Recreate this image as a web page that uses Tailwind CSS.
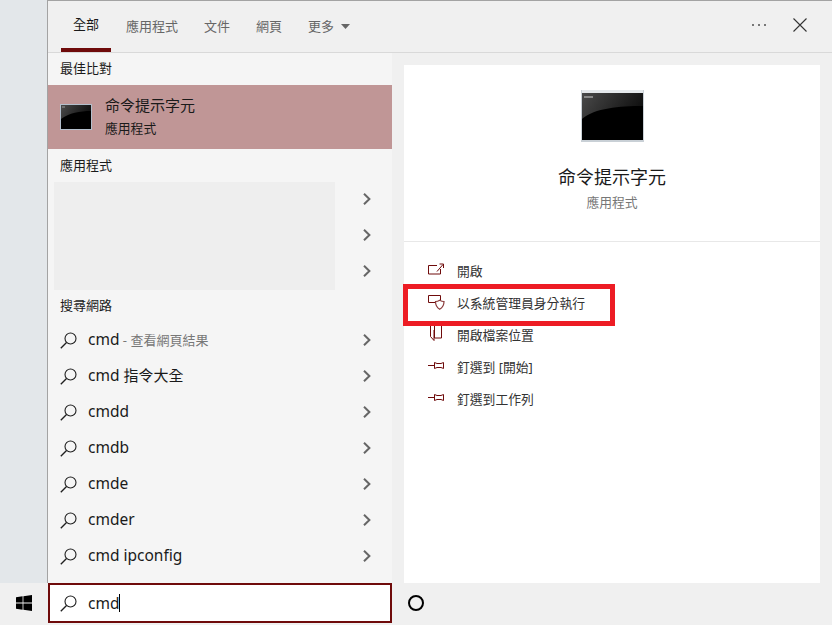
<!DOCTYPE html>
<html>
  <head>
    <title>Search cmd</title>
    <script src="https://cdn.jsdelivr.net/npm/@tailwindcss/browser@4"></script>
  </head>
  <body class="w-[832px] h-[625px] overflow-hidden bg-[#f0f0f0] text-[#1a1a1a] font-['Noto_Sans','Noto_Sans_CJK_TC',sans-serif]">
    <!-- shared icons -->
    <svg class="absolute w-0 h-0">
      <linearGradient id="shine" x1="0" y1="0" x2="1" y2="0.3">
        <stop offset="0" stop-color="#4a4a4a" />
        <stop offset="1" stop-color="#121212" />
      </linearGradient>
      <symbol id="search" viewBox="0 0 17 17">
        <circle cx="10.5" cy="6.5" r="5.5" fill="none" stroke="#1f1f1f" stroke-width="1.1" />
        <path d="M6.5 10.5L0.8 16.3" stroke="#1f1f1f" stroke-width="1.3" fill="none" />
      </symbol>
      <symbol id="chevron" viewBox="0 0 8 12">
        <path d="M1 0.8L6.4 6L1 11.2" stroke="#666" stroke-width="2" fill="none" />
      </symbol>
      <symbol id="pin" viewBox="0 0 17 9">
        <path d="M0 4.5H6M6.5 1.5L9 2.5H13L15.5 1.5V7.5L13 6.5H9L6.5 7.5Z" stroke="#6f0b0b" stroke-width="1" fill="none" />
      </symbol>
    </svg>

    <div class="flex h-[583px]">
      <div class="w-[47px] bg-[#e3e7ea]"></div>

      <div class="w-[785px] flex flex-col border-l border-t border-[#a3a3a3]">
        <!-- tabs -->
        <div class="h-[52px] shrink-0 flex items-stretch border-b border-[#d9d9d9] pl-[13px] text-[13px] text-[#666]">
          <div class="px-3 flex items-center pt-[1px] border-b-4 border-[#6f0b0b] text-[#1a1a1a] h-[51px]">全部</div>
          <div class="ml-[3px] px-3 flex items-center">應用程式</div>
          <div class="ml-[2px] px-3 flex items-center">文件</div>
          <div class="ml-[2px] px-3 flex items-center">網頁</div>
          <div class="ml-[2px] px-3 flex items-center gap-[7px]">
            更多
            <svg width="9" height="5" viewBox="0 0 9 5"><path d="M0 0H9L4.5 5Z" fill="#666" /></svg>
          </div>
          <div class="ml-auto flex items-center gap-[27px] pr-[25px] pb-[3px]">
            <div class="flex gap-[4px]">
              <div class="size-[2px] bg-[#777]"></div>
              <div class="size-[2px] bg-[#777]"></div>
              <div class="size-[2px] bg-[#777]"></div>
            </div>
            <svg width="14" height="14" viewBox="0 0 14 14"><path d="M0.5 0.5L13.5 13.5M13.5 0.5L0.5 13.5" stroke="#333" stroke-width="1.1" fill="none" /></svg>
          </div>
        </div>

        <div class="flex flex-1 min-h-0">
          <!-- results -->
          <div class="w-[344px] shrink-0 bg-[#f5f5f5]">
            <div class="h-8 pl-3 flex items-center text-[13px] text-[#1a1a1a]">最佳比對</div>
            <div class="h-16 pl-3 flex items-center gap-[13px] bg-[#c09696]">
              <svg class="w-8 h-[26px]" viewBox="0 0 32 26">
                <rect x="0.5" y="0.5" width="31" height="25" fill="#000" stroke="#b4bfcc" />
                <path d="M1 1H31V7C20 7 9 9 1 15Z" fill="url(#shine)" />
                <rect x="2" y="2.5" width="3" height="1" fill="#999" />
              </svg>
              <div class="pb-1">
                <div class="text-[15px] leading-5">命令提示字元</div>
                <div class="text-[12.8px] leading-4 mt-[5px]">應用程式</div>
              </div>
            </div>
            <div class="h-[33px] pl-3 flex items-center text-[13px]">應用程式</div>

            <div class="flex h-[108px]">
              <div class="ml-[6px] w-[281px] bg-[#eeeeee]"></div>
              <div class="ml-[28px] -mt-px flex flex-col">
                <div class="h-9 flex items-center"><svg class="w-2 h-3"><use href="#chevron" /></svg></div>
                <div class="h-9 flex items-center"><svg class="w-2 h-3"><use href="#chevron" /></svg></div>
                <div class="h-9 flex items-center"><svg class="w-2 h-3"><use href="#chevron" /></svg></div>
              </div>
            </div>

            <div class="h-8 pl-3 flex items-center text-[13px]">搜尋網路</div>
            <div class="flex flex-col text-[15.5px]">
              <div class="h-9 pl-3 pr-[21px] flex items-center">
                <svg class="size-[17px] mr-[11px]"><use href="#search" /></svg>
                <span>cmd<span class="text-[13px] text-[#777]"> - 查看網頁結果</span></span>
                <svg class="w-2 h-3 ml-auto"><use href="#chevron" /></svg>
              </div>
              <div class="h-9 pl-3 pr-[21px] flex items-center">
                <svg class="size-[17px] mr-[11px]"><use href="#search" /></svg>
                <span>cmd <span class="text-[15px]">指令大全</span></span>
                <svg class="w-2 h-3 ml-auto"><use href="#chevron" /></svg>
              </div>
              <div class="h-9 pl-3 pr-[21px] flex items-center">
                <svg class="size-[17px] mr-[11px]"><use href="#search" /></svg>
                <span>cmdd</span>
                <svg class="w-2 h-3 ml-auto"><use href="#chevron" /></svg>
              </div>
              <div class="h-9 pl-3 pr-[21px] flex items-center">
                <svg class="size-[17px] mr-[11px]"><use href="#search" /></svg>
                <span>cmdb</span>
                <svg class="w-2 h-3 ml-auto"><use href="#chevron" /></svg>
              </div>
              <div class="h-9 pl-3 pr-[21px] flex items-center">
                <svg class="size-[17px] mr-[11px]"><use href="#search" /></svg>
                <span>cmde</span>
                <svg class="w-2 h-3 ml-auto"><use href="#chevron" /></svg>
              </div>
              <div class="h-9 pl-3 pr-[21px] flex items-center">
                <svg class="size-[17px] mr-[11px]"><use href="#search" /></svg>
                <span>cmder</span>
                <svg class="w-2 h-3 ml-auto"><use href="#chevron" /></svg>
              </div>
              <div class="h-9 pl-3 pr-[21px] flex items-center">
                <svg class="size-[17px] mr-[11px]"><use href="#search" /></svg>
                <span>cmd ipconfig</span>
                <svg class="w-2 h-3 ml-auto"><use href="#chevron" /></svg>
              </div>
            </div>
          </div>

          <!-- details -->
          <div class="flex-1 pt-3 pl-3 pr-3">
            <div class="relative h-full bg-white">
              <div class="h-[177px] flex flex-col items-center border-b border-[#e8e8e8] pt-[25px]">
                <svg class="w-[63px] h-[52px]" viewBox="0 0 63 52">
                  <rect x="0" y="0" width="63" height="52" fill="#c9d0d6" />
                  <rect x="1" y="0" width="61" height="3" fill="#e4e8eb" />
                  <rect x="1" y="3" width="61" height="47" fill="#000" />
                  <path d="M1 3H62V16C38 16 14 18 1 29Z" fill="url(#shine)" />
                  <rect x="3" y="6" width="9" height="2" fill="#888" />
                </svg>
                <div class="mt-[23px] text-[18px] leading-6">命令提示字元</div>
                <div class="mt-[3px] text-[12.8px] leading-5 text-[#777]">應用程式</div>
              </div>

              <div class="pt-[14px] flex flex-col text-[12.8px] text-[#333]">
                <div class="h-8 pl-6 flex items-center gap-[13px]">
                  <svg class="mb-[6px]" width="16" height="12" viewBox="0 0 16 12"><path d="M9 2.5H0.5V11H12.5V6M9 8.5L15 1.5M11.5 1H15.5V5" stroke="#6f0b0b" fill="none" /></svg>
                  <span>開啟</span>
                </div>
                <div class="h-8 pl-6 flex items-center gap-[12px]">
                  <svg class="mb-[3px]" width="17" height="15" viewBox="0 0 17 15"><path d="M7 7.5H0.5V0.5H12.5V5" stroke="#6f0b0b" fill="none" /><path d="M7.5 6.5C9.5 6.5 10.5 6 11.7 5.2C13 6 14 6.5 16 6.5C16 10 15 12.5 11.7 14.2C8.5 12.5 7.5 10 7.5 6.5Z" stroke="#8a3a3a" stroke-width="1.2" fill="none" /></svg>
                  <span>以系統管理員身分執行</span>
                </div>
                <div class="h-8 pl-[26px] flex items-center gap-[15px]">
                  <svg class="mb-[5px]" width="12" height="15" viewBox="0 0 12 15"><path d="M0.5 0V10.5L4 14.5V4M4.5 0V12H11.5V0" stroke="#6f0b0b" fill="none" /></svg>
                  <span>開啟檔案位置</span>
                </div>
                <div class="h-8 pl-6 flex items-center gap-[12px]">
                  <svg class="w-[17px] h-[9px] mb-[6px]"><use href="#pin" /></svg>
                  <span>釘選到 [開始]</span>
                </div>
                <div class="h-8 pl-6 flex items-center gap-[12px]">
                  <svg class="w-[17px] h-[9px] mb-[6px]"><use href="#pin" /></svg>
                  <span>釘選到工作列</span>
                </div>
              </div>

              <!-- annotation box drawn over the menu -->
              <div class="absolute left-[-1px] top-[219px] w-[212px] h-[42px] border-[5px] border-[#ed1c24]"></div>
            </div>
          </div>
        </div>
      </div>
    </div>

    <!-- taskbar -->
    <div class="h-[42px] flex items-start">
      <div class="w-12 h-10 flex items-center justify-center">
        <svg width="16" height="16" viewBox="0 0 16 16"><path d="M0 2.2L6.6 1.3V7.5H0ZM7.4 1.2L16 0V7.5H7.4ZM0 8.4H6.6V14.7L0 13.8ZM7.4 8.4H16V16L7.4 14.8Z" fill="#000" /></svg>
      </div>
      <div class="w-[344px] h-10 bg-white border-2 border-[#6f0b0b] pl-[10px] flex items-center">
        <svg class="size-[17px] mr-[11px]"><use href="#search" /></svg>
        <span class="text-[15.5px] mt-[2px]">cmd</span>
        <div class="w-px h-[18px] bg-black"></div>
      </div>
      <div class="ml-[16px] w-4 h-10 flex items-center justify-center">
        <div class="size-4 rounded-full border-2 border-black"></div>
      </div>
    </div>
  </body>
</html>
